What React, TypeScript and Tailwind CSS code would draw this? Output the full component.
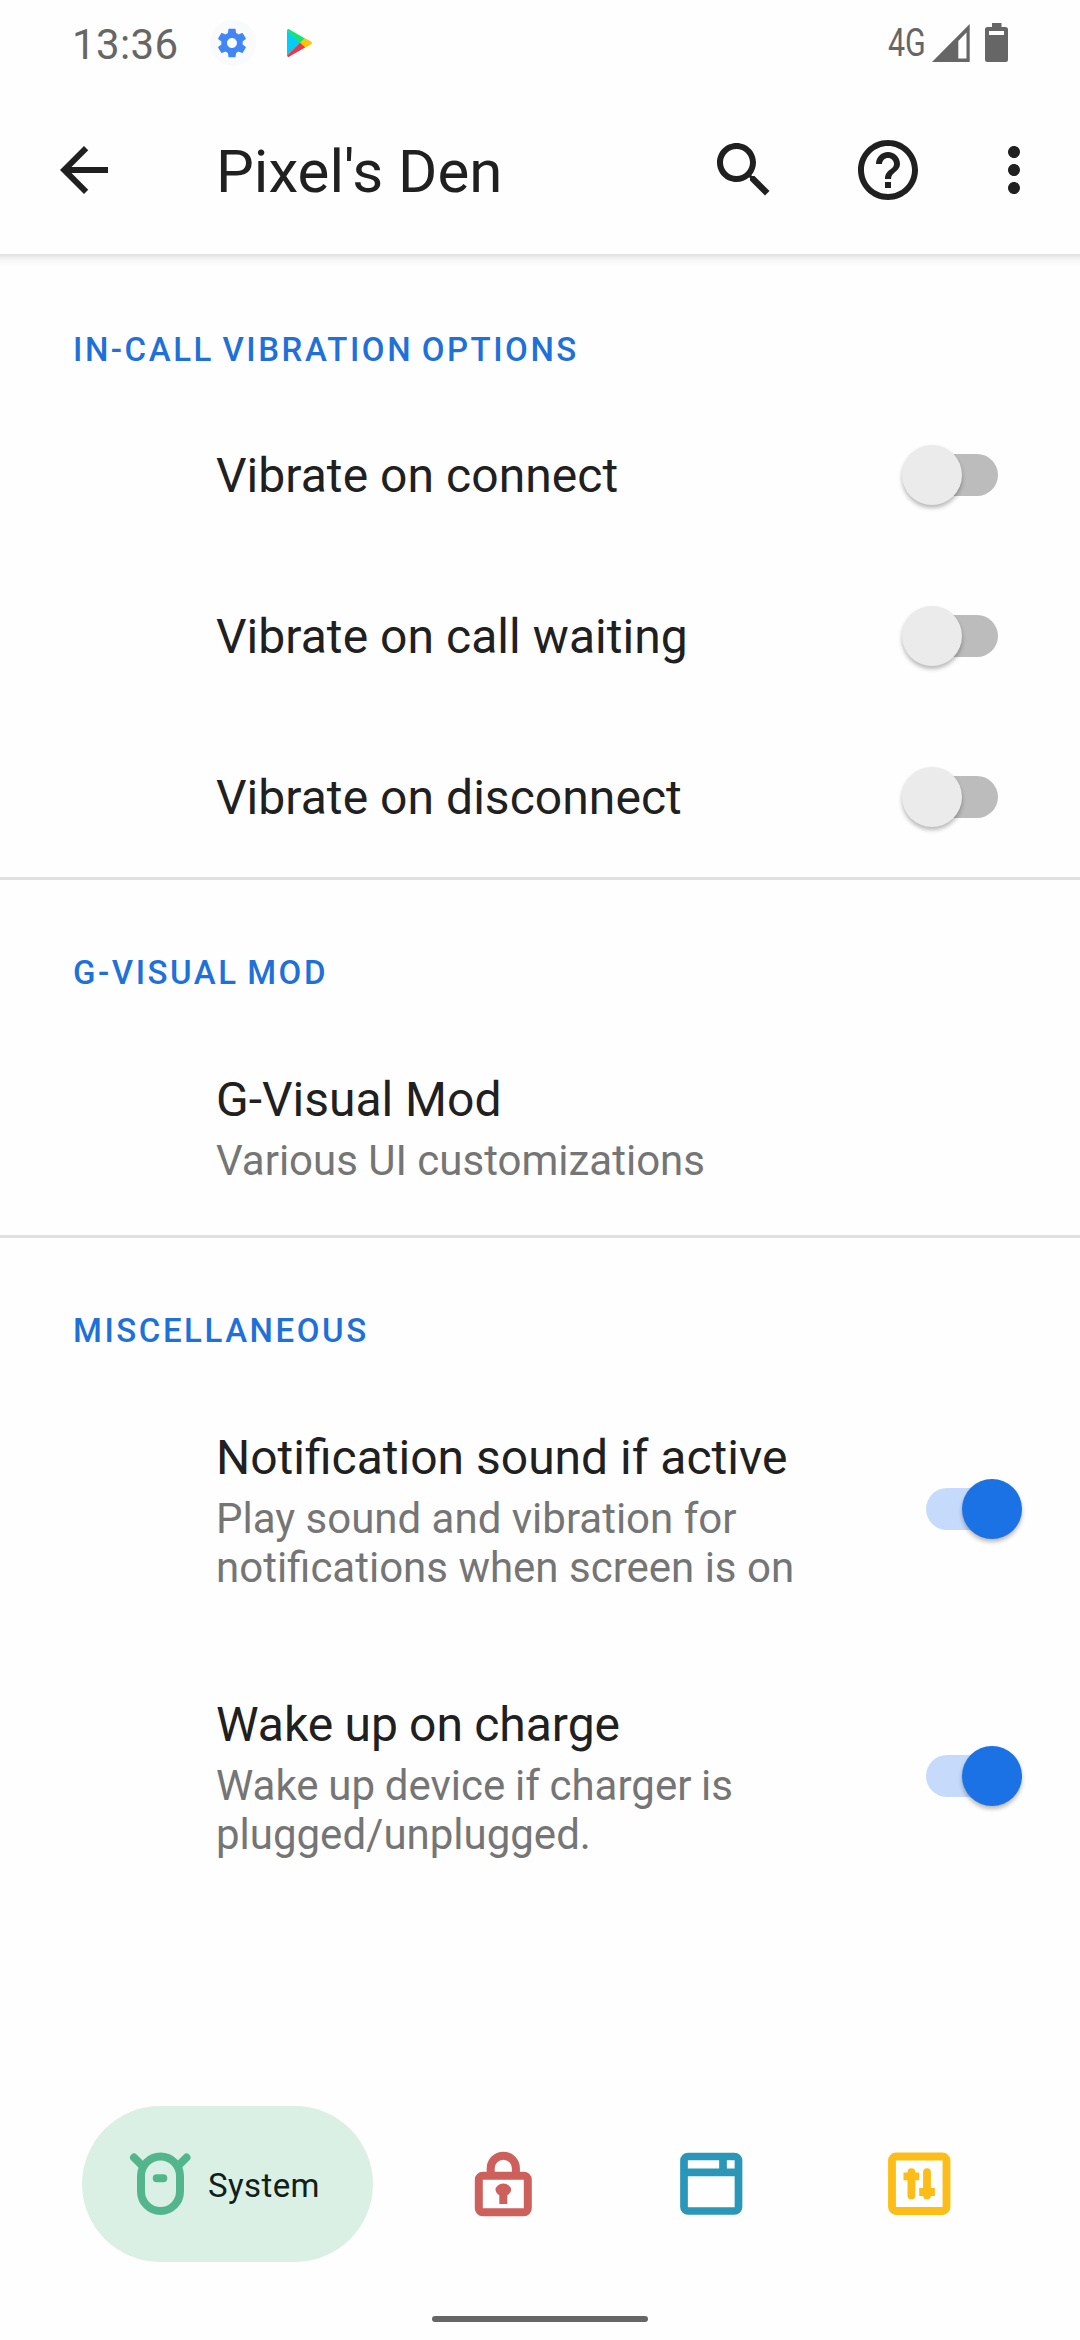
import React from "react";

function Toggle({ on = false }: { on?: boolean }) {
  return (
    <div className="relative flex h-[60px] w-[120px] shrink-0 items-center justify-center">
      <div className={on ? "h-[42px] w-[72px] rounded-full bg-[#c6dafb]" : "h-[42px] w-[72px] rounded-full bg-[#bcbcbc]"} />
      <div
        className={
          on
            ? "absolute top-0 right-0 size-[60px] rounded-full bg-[#1a72e5] shadow-[0_3px_4px_rgba(0,0,0,0.28)]"
            : "absolute top-0 left-0 size-[60px] rounded-full bg-[#ebebeb] shadow-[0_3px_4px_rgba(0,0,0,0.28)]"
        }
      />
    </div>
  );
}

function SectionTitle({ children }: { children: React.ReactNode }) {
  return (
    <h2 className="flex h-[137px] items-center pt-[48px] pl-[73px] text-[33px] font-medium tracking-[2.55px] text-[#1f71da] [word-spacing:-2.2px]">
      <span className="leading-[39px]">{children}</span>
    </h2>
  );
}

function SwitchRow({ title }: { title: string }) {
  return (
    <div className="flex h-[161px] items-center justify-between pr-[58px] pl-[216px]">
      <span className="pt-[3px] text-[48px] leading-[56px] tracking-[0.05px] text-[#202020] [font-variant-ligatures:common-ligatures]">
        {title}
      </span>
      <Toggle />
    </div>
  );
}

function DetailRow({ title, lines, on, tight }: { title: string; lines: string[]; on?: boolean; tight?: boolean }) {
  return (
    <div className="flex items-center justify-between pr-[58px] pl-[216px]">
      <div className={tight ? "pt-[55px] pb-[50px] [word-spacing:-0.7px]" : "pt-[55px] pb-[50px]"}>
        <div className="text-[48px] leading-[56px] text-[#202020]">{title}</div>
        <div className="mt-[8px] text-[42px] text-[#757575]">
          {lines.map((line) => (
            <div key={line} className="leading-[49px] whitespace-nowrap">
              {line}
            </div>
          ))}
        </div>
      </div>
      {on && <Toggle on />}
    </div>
  );
}

function StatusBar() {
  return (
    <div className="flex h-[86px] items-center justify-between pr-[72px] pl-[72px] text-[#666]">
      <div className="flex items-center">
        <span className="w-[138px] pt-[3px] text-[42px] leading-[50px] tracking-[0.4px]">13:36</span>
        <svg width="46" height="46" viewBox="0 0 46 46">
          <circle cx="23" cy="23" r="23" fill="#f8fafc" />
          <path
            transform="translate(4.900 5.900) scale(1.425)"
            fill="#4285f4"
            d="M19.43 12.98c.04-.32.07-.64.07-.98s-.03-.66-.07-.98l2.11-1.65c.19-.15.24-.42.12-.64l-2-3.46c-.12-.22-.39-.3-.61-.22l-2.49 1c-.52-.4-1.08-.73-1.69-.98l-.38-2.65C14.46 2.18 14.25 2 14 2h-4c-.25 0-.46.18-.49.42l-.38 2.65c-.61.25-1.17.59-1.69.98l-2.49-1c-.23-.09-.49 0-.61.22l-2 3.46c-.13.22-.07.49.12.64l2.11 1.65c-.04.32-.07.65-.07.98s.03.66.07.98l-2.11 1.65c-.19.15-.24.42-.12.64l2 3.46c.12.22.39.3.61.22l2.49-1c.52.4 1.08.73 1.69.98l.38 2.65c.03.24.24.42.49.42h4c.25 0 .46-.18.49-.42l.38-2.65c.61-.25 1.17-.59 1.69-.98l2.49 1c.23.09.49 0 .61-.22l2-3.46c.12-.22.07-.49-.12-.64l-2.11-1.65zM12 15.5c-1.93 0-3.5-1.57-3.5-3.5s1.57-3.5 3.5-3.5 3.5 1.57 3.5 3.5-1.57 3.5-3.5 3.5z"
          />
        </svg>
        <svg className="ml-[30px]" width="27" height="30" viewBox="0 0 27 30">
          <path d="M1 2.500V27.500L14.500 15Z" fill="#00cdf8" />
          <path d="M1 2.500Q1.500 .5 3 1.300L19 10.500L14 15.500Z" fill="#17e36f" />
          <path d="M19 10.300L25 13.600Q27 15 25 16.400L19 19.700L13.800 15Z" fill="#fcc50c" />
          <path d="M1 27.500Q1.500 29.500 3 28.700L19.200 19.500L14.200 14.800Z" fill="#e33b4e" />
        </svg>
      </div>
      <div className="flex items-center">
        <span className="w-[37px] origin-left scale-x-[0.8] text-[38px] leading-[44px] whitespace-nowrap">4G</span>
        <svg className="ml-[7px]" width="38" height="40" viewBox="0 0 38 40">
          <path fillRule="evenodd" fill="#666" d="M37.700 1V39H0ZM34.500 9.500L26.300 18V35.500H34.500Z" />
        </svg>
        <svg className="ml-[15px]" width="23" height="40" viewBox="0 0 23 40">
          <path
            fillRule="evenodd"
            fill="#666"
            d="M7 0H16.500V4H20.500Q23 4 23 6.500V36.500Q23 39 20.500 39H2.500Q0 39 0 36.500V6.500Q0 4 2.500 4H7ZM4 8V12H19V8Z"
          />
        </svg>
      </div>
    </div>
  );
}

function Glyph({ d, className }: { d: string; className?: string }) {
  return (
    <svg className={className} width="72" height="72" viewBox="0 0 24 24" fill="#202020">
      <path d={d} />
    </svg>
  );
}

function AppBar() {
  return (
    <header className="flex h-[168px] items-center pl-[48px]">
      <Glyph d="M20 11H7.830l5.590-5.590L12 4l-8 8 8 8 1.410-1.410L7.830 13H20v-2z" />
      <h1 className="ml-[96px] flex-1 pt-[3px] text-[60px] leading-[70px] text-[#202020]">Pixel&apos;s Den</h1>
      <Glyph d="M15.500 14h-.79l-.28-.27C15.410 12.590 16 11.110 16 9.500 16 5.910 13.090 3 9.500 3S3 5.910 3 9.500 5.910 16 9.500 16c1.610 0 3.090-.59 4.230-1.570l.27.28v.79l5 4.990L20.490 19l-4.990-5zm-6 0C7.010 14 5 11.990 5 9.500S7.010 5 9.500 5 14 7.010 14 9.500 11.990 14 9.500 14z" />
      <Glyph
        className="ml-[72px]"
        d="M11 18h2v-2h-2v2zm1-16C6.480 2 2 6.480 2 12s4.480 10 10 10 10-4.480 10-10S17.520 2 12 2zm0 18c-4.410 0-8-3.590-8-8s3.590-8 8-8 8 3.590 8 8-3.590 8-8 8zm0-14c-2.210 0-4 1.790-4 4h2c0-1.100.9-2 2-2s2 .9 2 2c0 2-3 1.750-3 5h2c0-2.250 3-2.500 3-5 0-2.210-1.790-4-4-4z"
      />
      <Glyph
        className="mr-[30px] ml-[54px]"
        d="M12 8c1.100 0 2-.9 2-2s-.9-2-2-2-2 .9-2 2 .9 2 2 2zm0 2c-1.100 0-2 .9-2 2s.9 2 2 2 2-.9 2-2-.9-2-2-2zm0 6c-1.100 0-2 .9-2 2s.9 2 2 2 2-.9 2-2-.9-2-2-2z"
      />
    </header>
  );
}

function BottomNav() {
  return (
    <nav className="flex h-[156px] items-center pl-[82px]">
      <div className="flex h-[156px] w-[291px] items-center rounded-full bg-[#dbf0e5] pl-[47px]">
        <svg width="62" height="66" viewBox="0 0 62 66" fill="none" stroke="#52b58b" strokeWidth="8" strokeLinecap="round">
          <rect x="12" y="5.500" width="39" height="54.500" rx="19.500" />
          <path d="M5 6.500L13.500 15M57.500 6.500L49 15M27.700 27.200H34.300" />
        </svg>
        <span className="ml-[17px] pt-[3px] text-[33px] leading-[40px] tracking-[0.4px] text-[#10201a]">System</span>
      </div>
      <svg className="ml-[101px]" width="58" height="66" viewBox="0 0 58 66" fill="none" stroke="#cd605b" strokeWidth="8">
        <rect x="4.800" y="24.700" width="49" height="36.600" rx="4" />
        <path d="M16.700 25V17.300A12.600 12.600 0 0 1 41.900 17.300V25M29.300 40V53" />
        <ellipse cx="29.300" cy="38.800" rx="7.800" ry="6.200" fill="#cd605b" stroke="none" />
      </svg>
      <svg className="ml-[148px]" width="64" height="64" viewBox="0 0 64 64" fill="none" stroke="#2a97b8" strokeWidth="7.700">
        <rect x="4" y="4.500" width="54.500" height="54.500" rx="4" />
        <path d="M4 20.300H58.500M43 4V20.300" />
      </svg>
      <svg className="ml-[144px]" width="64" height="64" viewBox="0 0 64 64" fill="none" stroke="#fcbd18" strokeWidth="7.800">
        <rect x="4" y="4.500" width="54.500" height="54.500" rx="4" />
        <path strokeLinecap="round" d="M23.400 20.200V43.400M39 20.200V43.400" />
        <path d="M15.500 24.300H31.200M31.200 40H46.900" />
      </svg>
    </nav>
  );
}

export default function App() {
  return (
    <div className="flex h-[2340px] w-[1080px] flex-col overflow-hidden bg-[#fefefe] font-['Roboto',sans-serif]">
      <StatusBar />
      <AppBar />
      <div className="h-[12px] shrink-0 bg-linear-to-b from-[#e0e0e0] via-[#f6f6f6] to-[#fefefe]" />
      <main className="-mt-[9px] flex-1">
        <section className="border-b-[3px] border-[#e0e0e0]">
          <SectionTitle>IN-CALL VIBRATION OPTIONS</SectionTitle>
          <SwitchRow title="Vibrate on connect" />
          <SwitchRow title="Vibrate on call waiting" />
          <SwitchRow title="Vibrate on disconnect" />
        </section>
        <section className="border-b-[3px] border-[#e0e0e0]">
          <SectionTitle>G-VISUAL MOD</SectionTitle>
          <DetailRow title="G-Visual Mod" lines={["Various UI customizations"]} />
        </section>
        <section>
          <SectionTitle>MISCELLANEOUS</SectionTitle>
          <DetailRow
            title="Notification sound if active"
            lines={["Play sound and vibration for", "notifications when screen is on"]}
            on
          />
          <DetailRow
            title="Wake up on charge"
            lines={["Wake up device if charger is", "plugged/unplugged."]}
            on
            tight
          />
        </section>
      </main>
      <BottomNav />
      <div className="flex h-[78px] shrink-0 items-end justify-center pb-[18px]">
        <div className="h-[6px] w-[216px] rounded-full bg-[#666]" />
      </div>
    </div>
  );
}
